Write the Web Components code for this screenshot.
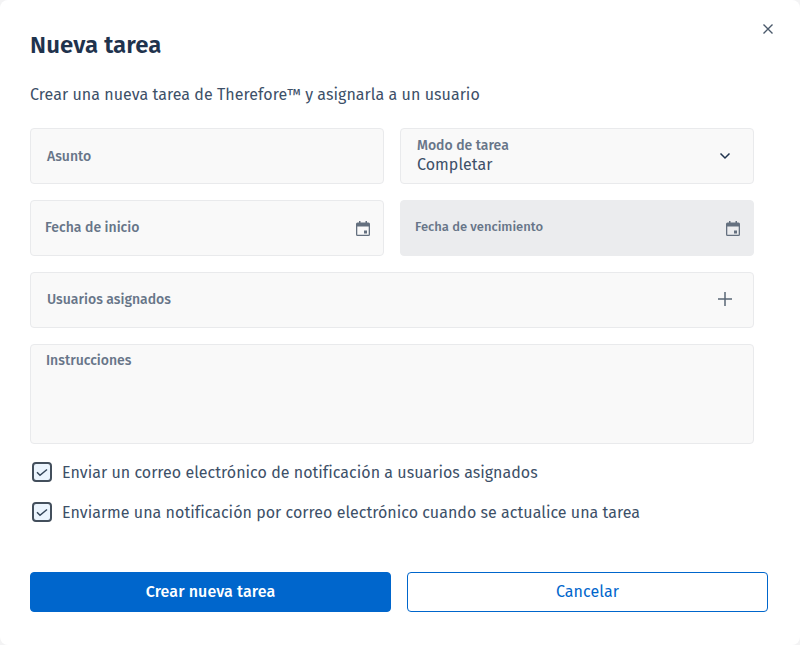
<!DOCTYPE html>
<html lang="es">
<head>
<meta charset="utf-8">
<title>Nueva tarea</title>
<style>
  html, body { margin: 0; padding: 0; background: #f3f3f4; }
  body { width: 800px; height: 645px; overflow: hidden; font-family: "Fira Sans", "Roboto", "Noto Sans", sans-serif; }
</style>
</head>
<body>
<task-dialog>
  <span slot="title">Nueva tarea</span>
  <span slot="intro">Crear una nueva tarea de Therefore™ y asignarla a un usuario</span>
  <form-row>
    <text-field label="Asunto"></text-field>
    <select-field label="Modo de tarea" value="Completar"></select-field>
  </form-row>
  <form-row>
    <date-field label="Fecha de inicio"></date-field>
    <date-field label="Fecha de vencimiento" disabled></date-field>
  </form-row>
  <add-field label="Usuarios asignados"></add-field>
  <area-field label="Instrucciones"></area-field>
  <check-row>Enviar un correo electrónico de notificación a usuarios asignados</check-row>
  <check-row>Enviarme una notificación por correo electrónico cuando se actualice una tarea</check-row>
  <action-button slot="actions" primary>Crear nueva tarea</action-button>
  <action-button slot="actions">Cancelar</action-button>
</task-dialog>

<script>
const fieldBox = /* css */`
  :host {
    display: flex;
    align-items: center;
    box-sizing: border-box;
    height: 56px;
    min-width: 0;
    background: #f9f9f9;
    border: 1px solid #e9eaec;
    border-radius: 4px;
    color: #677588;
    font-size: 14px;
    font-weight: 500;
  }
`;

class TaskDialog extends HTMLElement {
  constructor() {
    super();
    this.attachShadow({ mode: "open" });
    this.shadowRoot.innerHTML = /* html */`
      <style>
        :host {
          display: block;
          box-sizing: border-box;
          width: 800px;
          height: 645px;
          padding: 0 32px 0 30px;
          background: #fff;
          border-radius: 8px;
          color: #1f334d;
        }
        .close {
          position: absolute;
          top: 23px;
          left: 762px;
          width: 12px;
          height: 12px;
        }
        h1 {
          margin: 0;
          padding-top: 30px;
          height: 30px;
          font-size: 24px;
          line-height: 30px;
          font-weight: 600;
          letter-spacing: .1px;
          color: #1f334d;
        }
        .intro {
          margin-top: 24px;
          height: 22px;
          font-size: 16px;
          line-height: 22px;
          letter-spacing: .05px;
          color: #3d5068;
        }
        .body {
          display: flex;
          flex-direction: column;
          gap: 16px;
          margin-top: 22px;
          width: 724px;
        }
        .actions {
          display: grid;
          grid-template-columns: 361px 361px;
          gap: 16px;
          margin-top: 48px;
        }
      </style>
      <svg class="close" viewBox="0 0 12 12" fill="none" stroke="#4a596b" stroke-width="1.4">
        <path d="M1.500 1.500l9 9M10.500 1.500l-9 9"/>
      </svg>
      <h1><slot name="title"></slot></h1>
      <div class="intro"><slot name="intro"></slot></div>
      <div class="body"><slot></slot></div>
      <div class="actions"><slot name="actions"></slot></div>
    `;
  }
}

class FormRow extends HTMLElement {
  constructor() {
    super();
    this.attachShadow({ mode: "open" });
    this.shadowRoot.innerHTML = /* html */`
      <style>
        :host { display: grid; grid-template-columns: 354px 354px; gap: 16px; }
      </style>
      <slot></slot>
    `;
  }
}

class TextField extends HTMLElement {
  constructor() {
    super();
    this.attachShadow({ mode: "open" });
    this.shadowRoot.innerHTML = /* html */`
      <style>${fieldBox} :host { padding-left: 16px; }</style>
      <span>${this.getAttribute("label")}</span>
    `;
  }
}

class SelectField extends HTMLElement {
  constructor() {
    super();
    this.attachShadow({ mode: "open" });
    this.shadowRoot.innerHTML = /* html */`
      <style>
        ${fieldBox}
        :host { padding: 0 22px 0 16px; justify-content: space-between; }
        .label { line-height: 17px; }
        .value { margin-top: 1px; font-size: 16px; font-weight: 400; line-height: 20px; letter-spacing: .05px; color: #3d5068; }
        svg { width: 12px; height: 8px; }
      </style>
      <div>
        <div class="label">${this.getAttribute("label")}</div>
        <div class="value">${this.getAttribute("value")}</div>
      </div>
      <svg viewBox="0 0 12 8" fill="none" stroke="#1f334d" stroke-width="1.5"><path d="M1.500 1.500L6 6l4.500-4.500"/></svg>
    `;
  }
}

class DateField extends HTMLElement {
  constructor() {
    super();
    this.attachShadow({ mode: "open" });
    this.shadowRoot.innerHTML = /* html */`
      <style>
        ${fieldBox}
        :host { padding: 0 13px 0 14px; justify-content: space-between; }
        :host([disabled]) { background: #ebecee; border-color: #ebecee; }
        :host([disabled]) span { font-size: 13px; margin-top: -4px; }
        span { margin-top: -2px; }
        svg { width: 14px; height: 15px; }
      </style>
      <span>${this.getAttribute("label")}</span>
      <svg viewBox="0 0 14 15" fill="#64707f">
        <path d="M3 0h1.500v1.500h5V0H11v1.500h1.500A1.500 1.500 0 0 1 14 3v10.500a1.500 1.500 0 0 1-1.500 1.500h-11A1.500 1.500 0 0 1 0 13.500V3a1.500 1.500 0 0 1 1.500-1.500H3zM1.300 5.500v8.200h11.400V5.500z"/>
        <rect x="8" y="9.500" width="3" height="3"/>
      </svg>
    `;
  }
}

class AddField extends HTMLElement {
  constructor() {
    super();
    this.attachShadow({ mode: "open" });
    this.shadowRoot.innerHTML = /* html */`
      <style>
        ${fieldBox}
        :host { padding: 0 21px 0 16px; justify-content: space-between; }
        span { margin-top: -2px; }
        svg { width: 14px; height: 14px; margin-top: -2px; }
      </style>
      <span>${this.getAttribute("label")}</span>
      <svg viewBox="0 0 14 14" fill="none" stroke="#5a6776" stroke-width="1.500"><path d="M7 0v14M0 7h14"/></svg>
    `;
  }
}

class AreaField extends HTMLElement {
  constructor() {
    super();
    this.attachShadow({ mode: "open" });
    this.shadowRoot.innerHTML = /* html */`
      <style>
        ${fieldBox}
        :host { height: 100px; align-items: flex-start; padding: 7px 15px; }
      </style>
      <span>${this.getAttribute("label")}</span>
    `;
  }
}

class CheckRow extends HTMLElement {
  constructor() {
    super();
    this.attachShadow({ mode: "open" });
    this.shadowRoot.innerHTML = /* html */`
      <style>
        :host {
          display: flex;
          align-items: center;
          gap: 10px;
          height: 24px;
          padding-left: 2px;
          font-size: 16px;
          letter-spacing: .03px;
          color: #3d5068;
        }
        svg { width: 20px; height: 20px; flex: none; }
      </style>
      <svg viewBox="0 0 20 20" fill="none">
        <rect x="1" y="1" width="18" height="18" rx="3" fill="#ebf4fd" stroke="#434f5c" stroke-width="2"/>
        <path d="M5 10.300l3 3L15 7.500" stroke="#36475a" stroke-width="1.500"/>
      </svg>
      <span><slot></slot></span>
    `;
  }
}

class ActionButton extends HTMLElement {
  constructor() {
    super();
    this.attachShadow({ mode: "open" });
    this.shadowRoot.innerHTML = /* html */`
      <style>
        :host {
          display: flex;
          align-items: center;
          justify-content: center;
          box-sizing: border-box;
          height: 40px;
          padding-bottom: 2px;
          border: 1px solid #0066cc;
          border-radius: 4px;
          background: #fff;
          color: #0066cc;
          font-size: 16px;
          letter-spacing: .1px;
        }
        :host([primary]) { background: #0066cc; color: #fff; font-weight: 500; }
      </style>
      <slot></slot>
    `;
  }
}

customElements.define("task-dialog", TaskDialog);
customElements.define("form-row", FormRow);
customElements.define("text-field", TextField);
customElements.define("select-field", SelectField);
customElements.define("date-field", DateField);
customElements.define("add-field", AddField);
customElements.define("area-field", AreaField);
customElements.define("check-row", CheckRow);
customElements.define("action-button", ActionButton);
</script>
</body>
</html>
